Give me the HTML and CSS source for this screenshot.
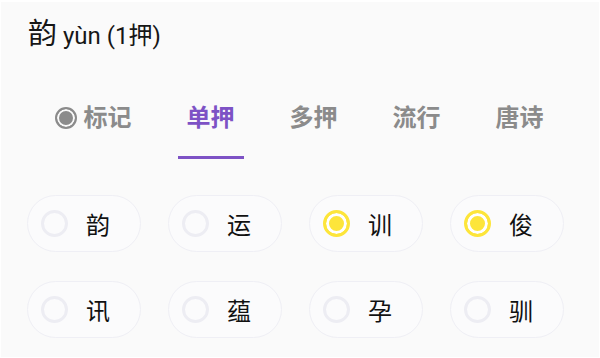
FILE: index.html
```html
<!DOCTYPE html>
<html lang="zh">
<head>
  <meta charset="UTF-8">
  <title>韵 yùn</title>
  <link rel="stylesheet" href="styles.css">
</head>
<body>
  <div class="page">
    <div class="header">
      <span class="word">韵</span>
      <span class="pinyin">yùn (1押)</span>
    </div>

    <div class="tabs">
      <div class="tab"><span class="tab-label"><i class="mark"></i>标记</span></div>
      <div class="tab active"><span class="tab-label">单押</span></div>
      <div class="tab"><span class="tab-label">多押</span></div>
      <div class="tab"><span class="tab-label">流行</span></div>
      <div class="tab"><span class="tab-label">唐诗</span></div>
    </div>

    <div class="rhymes">
      <div class="pill"><i class="radio"></i><span>韵</span></div>
      <div class="pill"><i class="radio"></i><span>运</span></div>
      <div class="pill"><i class="radio on"></i><span>训</span></div>
      <div class="pill"><i class="radio on"></i><span>俊</span></div>
      <div class="pill"><i class="radio"></i><span>讯</span></div>
      <div class="pill"><i class="radio"></i><span>蕴</span></div>
      <div class="pill"><i class="radio"></i><span>孕</span></div>
      <div class="pill"><i class="radio"></i><span>驯</span></div>
    </div>
  </div>
</body>
</html>
```

FILE: styles.css
```css
body {
  margin: 0;
  background: #fff;
  font-family: Roboto, "Noto Sans CJK SC", sans-serif;
  color: #161616;
}

.page {
  margin: 2px 1px 1px 1px;
  height: 355px;
  background: #fafafa;
  overflow: hidden;
}

.header {
  padding: 10px 0 0 27px;
  line-height: 44px;
  height: 44px;
}

.word {
  font-size: 29px;
  margin-right: 2px;
}

.pinyin {
  font-size: 24px;
}

.tabs {
  display: flex;
  padding-left: 26px;
  margin-top: 50px;
}

.tab {
  padding: 0 18.5px;
  font-size: 24px;
  font-weight: bold;
  color: #8b8b8b;
}

.tab-label {
  display: flex;
  align-items: center;
  padding: 0 9px 26px;
  line-height: 24px;
  border-bottom: 3px solid transparent;
}

.tab.active .tab-label {
  color: #7d52c5;
  border-bottom-color: #7d52c5;
}

.mark {
  width: 18px;
  height: 18px;
  border: 2.5px solid #8b8b8b;
  border-radius: 50%;
  background: #8b8b8b;
  box-shadow: inset 0 0 0 2px #fafafa;
  margin-right: 7px;
}

.rhymes {
  display: grid;
  grid-template-columns: repeat(4, 114px);
  column-gap: 27px;
  row-gap: 29px;
  padding-left: 26px;
  margin-top: 36px;
}

.pill {
  display: flex;
  align-items: center;
  height: 55px;
  padding-left: 13px;
  border: 1.5px solid #efeff5;
  border-radius: 29px;
  background: #fbfbfc;
  font-size: 24px;
  color: #111;
}

.pill span {
  margin-left: 18px;
}

.radio {
  width: 21px;
  height: 21px;
  border: 3px solid #ededf3;
  border-radius: 50%;
}

.radio.on {
  border-color: #fde53a;
  background: #fde53a;
  box-shadow: inset 0 0 0 3px #fff;
}
```
